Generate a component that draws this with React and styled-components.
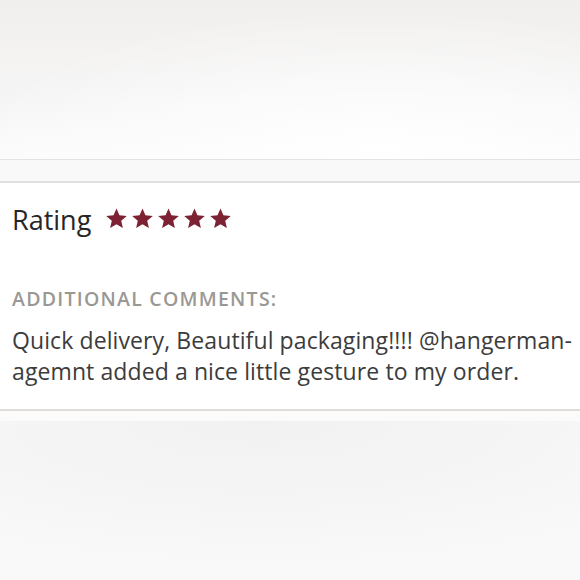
import React from "react";
import styled, { createGlobalStyle } from "styled-components";

const GlobalStyle = createGlobalStyle`
  html, body {
    margin: 0;
    padding: 0;
    background: #fafafa;
  }
  body {
    font-family: "Open Sans", "Noto Sans", sans-serif;
    -webkit-font-smoothing: antialiased;
  }
`;

const Page = styled.div`
  width: 580px;
  height: 580px;
  display: flex;
  flex-direction: column;
  overflow: hidden;
`;

const TopShade = styled.div`
  height: 159px;
  flex-shrink: 0;
  background:
    radial-gradient(ellipse 420px 150px at 65% 100%, #ffffff 0%, rgba(255,255,255,0) 100%),
    linear-gradient(#f0efed 0%, #f6f5f5 60%, #fbfbfb 100%);
  border-bottom: 1px solid #e4e2e2;
`;

const Gap = styled.div`
  height: 21px;
  flex-shrink: 0;
  background: #f9f9f9;
  border-bottom: 2px solid #e2dfdf;
`;

const Card = styled.section`
  height: 228px;
  flex-shrink: 0;
  background: #fff;
  border-bottom: 2px solid #e0dcda;
  padding: 0 0 0 12px;
  box-sizing: border-box;
  display: flex;
  flex-direction: column;
`;

const RatingRow = styled.div`
  display: flex;
  align-items: center;
  gap: 14px;
  margin-top: 18px;
  height: 36px;
`;

const RatingLabel = styled.span`
  font-size: 27px;
  font-weight: 500;
  color: #262626;
`;

const Stars = styled.div`
  display: flex;
  gap: 3px;
  margin-top: -2px;
`;

const StarIcon = styled.svg`
  width: 23px;
  height: 23px;
  fill: ${(p) => p.$color};
`;

const SectionTitle = styled.div`
  margin-top: 48px;
  font-size: 19.5px;
  font-weight: 600;
  color: #9a9893;
  letter-spacing: 1.25px;
  text-transform: uppercase;
`;

const Comment = styled.div`
  margin-top: 13px;
  font-size: 23px;
  line-height: 31px;
  color: #3c3c3c;
  letter-spacing: 0.1px;
`;

const CommentLine = styled.div`
  white-space: nowrap;
`;

const BottomShade = styled.div`
  flex: 1;
  border-top: 10px solid #fbfbfb;
  background:
    radial-gradient(ellipse 520px 150px at 45% 0%, #f1f1f1 0%, rgba(249,249,249,0) 100%),
    #f9f9f9;
`;

const Star = ({ color }) => (
  <StarIcon $color={color} viewBox="0 0 24 24">
    <path d="M12 1.6l3.05 7.1 7.7.7-5.85 5.07 1.75 7.53L12 18.03 5.35 22l1.75-7.53L1.25 9.4l7.7-.7z" />
  </StarIcon>
);

const commentLines = [
  "Quick delivery, Beautiful packaging!!!! @hangerman-",
  "agemnt added a nice little gesture to my order.",
];

export default function App() {
  const rating = 5;
  return (
    <>
      <GlobalStyle />
      <Page>
        <TopShade />
        <Gap />
        <Card>
          <RatingRow>
            <RatingLabel>Rating</RatingLabel>
            <Stars>
              {Array.from({ length: rating }).map((_, i) => (
                <Star key={i} color="#7d2232" />
              ))}
            </Stars>
          </RatingRow>
          <SectionTitle>Additional Comments:</SectionTitle>
          <Comment>
            {commentLines.map((line) => (
              <CommentLine key={line}>{line}</CommentLine>
            ))}
          </Comment>
        </Card>
        <BottomShade />
      </Page>
    </>
  );
}
